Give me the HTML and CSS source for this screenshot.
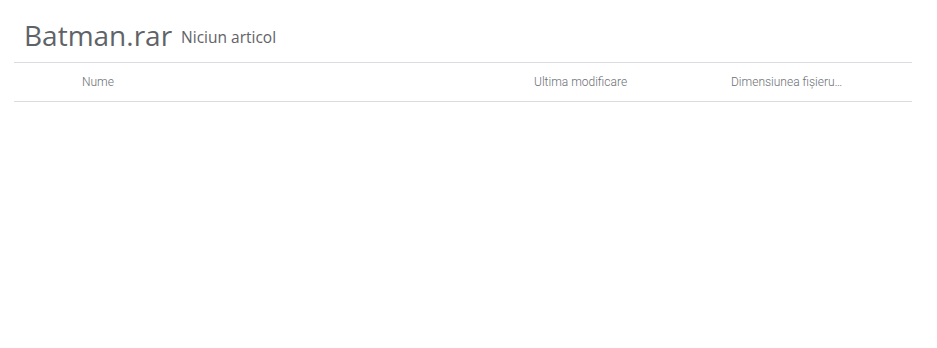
FILE: index.html
```html
<!DOCTYPE html>
<html lang="ro">
<head>
<meta charset="utf-8">
<link rel="stylesheet" href="styles.css">
</head>
<body>
<div class="page">
  <div class="title-row">
    <h1 class="title">Batman.rar</h1>
    <span class="count">Niciun articol</span>
  </div>
  <div class="table-head">
    <div class="col col-name">Nume</div>
    <div class="col col-mod">Ultima modificare</div>
    <div class="col col-size">Dimensiunea fișieru…</div>
  </div>
</div>
</body>
</html>
```
FILE: styles.css
```css
html, body {
  margin: 0;
  padding: 0;
  background: #fff;
}
body {
  font-family: Roboto, "Noto Sans", sans-serif;
  color: #5f6368;
}
.page {
  padding: 0 25px 0 14px;
}
.title-row {
  display: flex;
  align-items: flex-start;
  padding: 20px 0 0 10px;
  height: 62px;
  box-sizing: border-box;
}
.title {
  margin: 0;
  font-family: "Open Sans", Roboto, sans-serif;
  font-weight: 400;
  font-size: 28px;
  line-height: 30px;
  color: #5f6368;
}
.count {
  margin: 7px 0 0 9px;
  font-family: "Open Sans", Roboto, sans-serif;
  font-size: 15.5px;
  line-height: 20px;
  color: #5f6368;
}
.table-head {
  display: grid;
  grid-template-columns: 520px 197px 1fr;
  align-items: center;
  height: 38px;
  border-top: 1px solid #dadce0;
  border-bottom: 1px solid #dadce0;
  font-size: 12px;
  font-weight: 300;
  color: #6b6f74;
}
.col-name {
  padding-left: 68px;
}
```
